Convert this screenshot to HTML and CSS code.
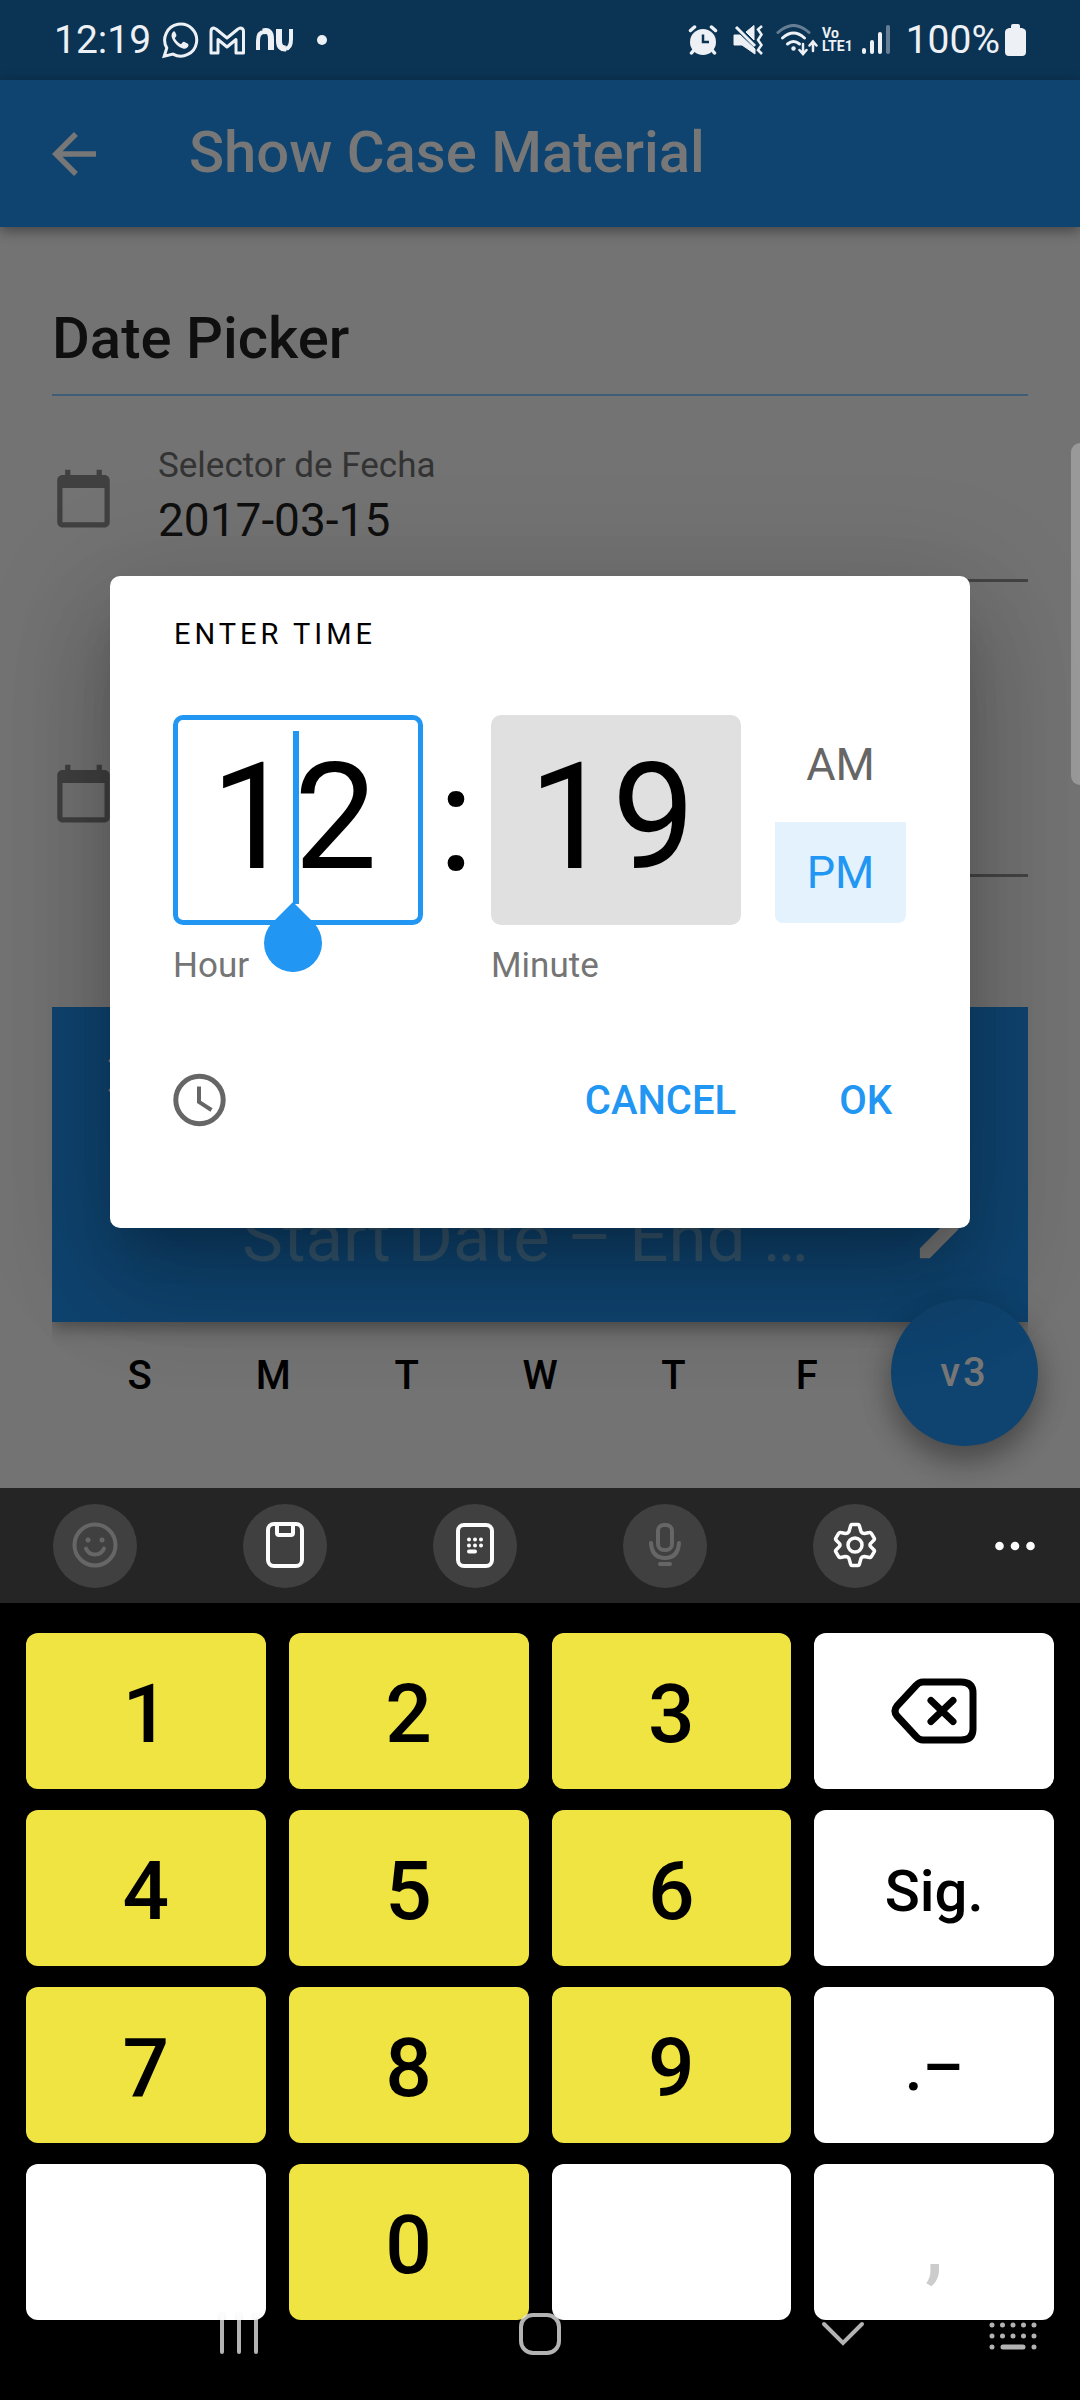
FILE: index.html
```html
<!DOCTYPE html>
<html lang="es">
<head>
<meta charset="utf-8">
<meta name="viewport" content="width=device-width, initial-scale=1">
<title>Show Case Material</title>
<link rel="stylesheet" href="styles.css">
</head>
<body>
<div class="screen">
  <div class="app">
    <div class="status">
      <div class="status-left">
        <span class="status-text">12:19</span>
        <svg width="38" height="38" viewBox="0 0 38 38" fill="none" stroke="currentColor"><path d="M3.200 35.200l2.600-8.200a16 16 0 1 1 6.200 6.100z" stroke-width="3"/><path d="M12.500 10.500c-2 1.500-2.500 4-1.500 6.500 2 5 6 9 11 10.500 2.500.7 5-.5 5.500-3 .1-1-.3-1.500-1-2l-3-1.500c-1-.4-1.500 0-2.200.8l-1.300 1.400c-2.500-1-5-3.500-6.200-6l1.200-1.600c.6-.7.5-1.300.2-2l-1.100-2.600c-.4-.8-1-.9-1.600-.5z" fill="currentColor" stroke="none"/></svg>
        <svg width="36" height="29" viewBox="0 0 36 29" fill="none" stroke="currentColor" stroke-width="3" stroke-linejoin="round"><path d="M2 5.500Q2 2 5 2L7 3l11 9L29 3l2-1q3.500 0 3.500 3.500V27H27V13.500l-9 7.500-9-7.500V27H2z"/></svg>
        <svg width="40" height="24" viewBox="0 0 40 24" fill="none" stroke="currentColor"><path d="M3 22V13Q3 4 9 4" stroke-width="4"/><path d="M8 3.500Q16 1 16 11V22M24 1v12q0 8 7 7.500" stroke-width="6"/><path d="M31 20.500Q36 20 36 11V1" stroke-width="4"/></svg>
        <svg class="status-dot" width="10" height="10" viewBox="0 0 10 10"><circle cx="5" cy="5" r="5" fill="currentColor"/></svg>
      </div>
      <div class="status-right">
        <svg width="30" height="30" viewBox="0 0 30 30" fill="none" stroke="currentColor" stroke-linecap="round"><circle cx="15" cy="17" r="13" fill="currentColor" stroke="none"/><path d="M2.500 5.500l4-3.500M27.500 5.500l-4-3.500M6 25l-2.500 3M24 25l2.500 3" stroke-width="3.500"/><path d="M15 9.500V17h6" class="status-cut" stroke-width="2.500" stroke-linecap="butt"/></svg>
        <svg class="mute" width="30" height="30" viewBox="0 0 30 30" fill="none" stroke="currentColor"><path d="M1 10h6l15 14v5L9 20H1zM13 7l8-6.500V15z" fill="currentColor"/><path d="M3 2l19 19" stroke-width="3"/><path d="M29 1l-4 3.500 3.500 5L25 15l3.500 5L25 25l4 4" stroke-width="2.500"/></svg>
        <svg class="wifi" width="42" height="32" viewBox="0 0 42 32" fill="none" stroke="currentColor" stroke-width="3" stroke-linecap="round"><path d="M2 8.500q15.500-14 31 0" opacity=".4"/><path d="M6.500 14q11-10 22 0M11.500 20q6-5 12 0"/><circle cx="17.500" cy="24.500" r="2.200" fill="currentColor" stroke="none"/><path d="M27 20v9M23.500 26l3.500 4 3.500-4M37 27v-9M33.500 21.500l3.500-4 3.500 4" stroke-width="2.500"/></svg>
        <span class="lte">Vo<br>LTE1</span>
        <svg class="signal" width="28" height="30" viewBox="0 0 28 30" fill="currentColor"><rect y="23" width="4" height="6" rx="2"/><rect x="8" y="15" width="4" height="14" rx="2"/><rect x="16" y="7" width="4" height="22" rx="2"/><rect x="24" width="4" height="29" rx="2" opacity=".4"/></svg>
        <span class="status-text">100%</span>
        <svg class="battery" width="21" height="32" viewBox="0 0 21 32" fill="currentColor"><path d="M6 4V2q0-2 2-2h5q2 0 2 2v2h2q4 1 4 4v20q0 4-4 4H4q-4 0-4-4V8q0-3 4-4z"/></svg>
      </div>
    </div>
    <header class="appbar">
      <button class="icon-button" aria-label="Back"><svg width="66" height="66" viewBox="0 0 24 24" fill="currentColor"><path d="M20 11H7.830l5.590-5.590L12 4l-8 8 8 8 1.410-1.410L7.830 13H20v-2z"/></svg></button>
      <h1 class="title">Show Case Material</h1>
    </header>
    <main class="content">
      <h2 class="section-title">Date Picker</h2>
      <div class="field">
        <svg class="field-icon" width="63" height="63" viewBox="0 0 24 24" fill="currentColor"><path d="M20 3h-1V1h-2v2H7V1H5v2H4c-1.100 0-2 .9-2 2v16c0 1.100.9 2 2 2h16c1.100 0 2-.9 2-2V5c0-1.100-.9-2-2-2zm0 18H4V8h16v13z"/></svg>
        <div class="field-body">
          <label class="field-label" for="date">Selector de Fecha</label>
          <input class="field-input" id="date" type="text" value="2017-03-15">
        </div>
      </div>
      <div class="field">
        <svg class="field-icon" width="63" height="63" viewBox="0 0 24 24" fill="currentColor"><path d="M20 3h-1V1h-2v2H7V1H5v2H4c-1.100 0-2 .9-2 2v16c0 1.100.9 2 2 2h16c1.100 0 2-.9 2-2V5c0-1.100-.9-2-2-2zm0 18H4V8h16v13z"/></svg>
        <div class="field-body field-body-empty">
          <input class="field-input" id="time" type="text" aria-label="Time">
        </div>
      </div>
      <section class="range">
        <button class="icon-button" aria-label="Close"><svg width="63" height="63" viewBox="0 0 24 24" fill="currentColor"><path d="M19 6.410L17.590 5 12 10.590 6.410 5 5 6.410 10.590 12 5 17.590 6.410 19 12 13.410 17.590 19 19 17.590 13.410 12z"/></svg></button>
        <div class="range-row">
          <span class="range-text">Start Date – End …</span>
          <button class="icon-button range-edit" aria-label="Edit"><svg width="63" height="63" viewBox="0 0 24 24" fill="currentColor"><path d="M3 17.250V21h3.750L17.810 9.940l-3.750-3.750L3 17.250zM20.710 7.040a1 1 0 0 0 0-1.410l-2.340-2.340a1 1 0 0 0-1.410 0l-1.830 1.830 3.750 3.750z"/></svg></button>
        </div>
      </section>
      <div class="weekdays"><span>S</span><span>M</span><span>T</span><span>W</span><span>T</span><span>F</span></div>
    </main>
    <button class="fab">v3</button>
    <div class="edge-handle"></div>

    <div class="overlay">
      <form class="dialog" role="dialog" aria-labelledby="dialog-title">
        <h2 class="dialog-title" id="dialog-title">ENTER TIME</h2>
        <div class="time-row">
          <div class="unit">
            <div class="unit-box">
              <input class="unit-input unit-active" id="hour" type="text" value="12">
              <span class="caret"></span>
              <svg class="caret-handle" width="58" height="70" viewBox="0 0 58 70"><path d="M29 0L49.500 20.500A29 29 0 1 1 8.500 20.500z" fill="currentColor"/></svg>
            </div>
            <label class="unit-label" for="hour">Hour</label>
          </div>
          <span class="colon">:</span>
          <div class="unit">
            <div class="unit-box"><input class="unit-input" id="minute" type="text" value="19"></div>
            <label class="unit-label" for="minute">Minute</label>
          </div>
          <div class="period">
            <button type="button" class="period-button period-off" aria-pressed="false">AM</button>
            <button type="button" class="period-button period-on" aria-pressed="true">PM</button>
          </div>
        </div>
        <div class="actions">
          <button type="button" class="icon-button mode" aria-label="Switch to dial"><svg width="53" height="54" viewBox="0 0 53 54" fill="none" stroke="currentColor"><circle cx="26.500" cy="27" r="23.700" stroke-width="5"/><path d="M26 13.500V29l12.500 8" stroke-width="4"/></svg></button>
          <button type="button" class="text-button">CANCEL</button>
          <button type="button" class="text-button">OK</button>
        </div>
      </form>
    </div>
  </div>

  <div class="keyboard">
    <div class="tools">
      <div class="tool-group">
        <button class="tool tool-off" aria-label="Emoji"><svg width="46" height="46" viewBox="0 0 46 46" fill="none" stroke="currentColor" stroke-width="4" stroke-linecap="round"><circle cx="23" cy="23" r="20.500"/><path d="M14 26.500q2.500 6 9 6t9-6"/><circle cx="16" cy="18" r="2.500" fill="currentColor" stroke="none"/><circle cx="30" cy="18" r="2.500" fill="currentColor" stroke="none"/></svg></button>
        <button class="tool" aria-label="Clipboard"><svg width="40" height="46" viewBox="0 0 40 46" fill="none" stroke="currentColor" stroke-width="4"><rect x="3" y="2" width="34" height="42" rx="6"/><path d="M12 2v9q0 2 2 2h12q2 0 2-2V2"/></svg></button>
        <button class="tool" aria-label="Keypad"><svg width="40" height="46" viewBox="0 0 40 46" fill="none" stroke="currentColor" stroke-width="4"><rect x="3" y="3" width="34" height="41" rx="6"/><path d="M14 17.500h0M20 17.500h0M26 17.500h0M14 23.500h0M20 23.500h0M26 23.500h0M14 29.500h6" stroke-linecap="round"/></svg></button>
        <button class="tool tool-off" aria-label="Voice"><svg width="34" height="46" viewBox="0 0 34 46" fill="none" stroke="currentColor" stroke-width="4" stroke-linecap="round"><rect x="10" y="3" width="14" height="25" rx="6"/><path d="M3 21q1 15 14 15t14-15M12 42h10"/></svg></button>
        <button class="tool" aria-label="Settings"><svg width="44" height="46" viewBox="0 0 44 46" fill="none" stroke="currentColor" stroke-width="3.500" stroke-linejoin="round"><path d="M19 2.500h6q1 0 1.300 1L28 9.500q1 2 3.500 2l5-1q1-.3 1.700.7l3 5q.6 1-.2 1.800l-3.500 3.600q-1 1.400 0 2.800l3.500 3.600q.8.800.2 1.800l-3 5q-.7 1-1.700.7l-5-1q-2.500 0-3.500 2l-1.700 6q-.3 1-1.300 1h-6q-1 0-1.300-1L16 36.500q-1-2-3.500-2l-5 1q-1 .3-1.700-.7l-3-5q-.6-1 .2-1.800l3.500-3.600q1-1.400 0-2.800L3 18q-.8-.8-.2-1.800l3-5q.7-1 1.700-.7l5 1q2.500 0 3.500-2l1.700-6q.3-1 1.300-1z"/><circle cx="22" cy="23" r="7"/></svg></button>
      </div>
      <button class="tool-more" aria-label="More"><svg width="40" height="10" viewBox="0 0 40 10" fill="currentColor"><circle cx="4.500" cy="5" r="4.300"/><circle cx="20" cy="5" r="4.300"/><circle cx="35.500" cy="5" r="4.300"/></svg></button>
    </div>
    <div class="keys">
      <button class="key">1</button><button class="key">2</button><button class="key">3</button>
      <button class="key key-alt key-icon" aria-label="Delete"><svg width="86" height="66" viewBox="0 0 86 66" fill="none" stroke="currentColor" stroke-width="7" stroke-linecap="round" stroke-linejoin="round"><path d="M32 4h38q12 0 12 11v36q0 11-12 11H32q-4 0-7-3.500L6 38q-4-5 0-10L25 7.500Q28 4 32 4z"/><path d="M40 22.500l22 21M62 22.500l-22 21"/></svg></button>
      <button class="key">4</button><button class="key">5</button><button class="key">6</button><button class="key key-alt">Sig.</button>
      <button class="key">7</button><button class="key">8</button><button class="key">9</button><button class="key key-alt key-marks">.–</button>
      <button class="key key-alt" aria-label="Blank"></button><button class="key">0</button><button class="key key-alt" aria-label="Blank"></button><button class="key key-alt key-off">,</button>
    </div>
    <nav class="navbar">
      <div class="nav-main">
        <button class="icon-button" aria-label="Recents"><svg width="40" height="42" viewBox="0 0 40 42" stroke="currentColor" stroke-width="4" stroke-linecap="round"><path d="M3 3v36M20 3v36M37 3v36"/></svg></button>
        <button class="icon-button" aria-label="Home"><svg width="42" height="42" viewBox="0 0 42 42" fill="none" stroke="currentColor" stroke-width="4"><rect x="2" y="2" width="38" height="38" rx="12"/></svg></button>
        <button class="icon-button" aria-label="Hide keyboard"><svg width="44" height="42" viewBox="0 0 44 42" fill="none" stroke="currentColor" stroke-width="4" stroke-linecap="round"><path d="M3 11l19 19 19-19"/></svg></button>
      </div>
      <button class="icon-button nav-keyboard" aria-label="Choose keyboard"><svg width="48" height="28" viewBox="0 0 48 28" stroke="currentColor" stroke-width="5" stroke-linecap="round"><path d="M3 3h0M13.500 3h0M24 3h0M34.500 3h0M45 3h0M3 14h0M13.500 14h0M24 14h0M34.500 14h0M45 14h0M3 25h0M14 25h20M45 25h0"/></svg></button>
    </nav>
  </div>
</div>
</body>
</html>
```
FILE: styles.css
```css
* {
  box-sizing: border-box;
}

body {
  margin: 0;
  background: #000;
  font-family: Roboto, "Noto Sans", sans-serif;
}

h1, h2 {
  margin: 0;
  font-weight: 500;
}

button, input {
  margin: 0;
  padding: 0;
  border: 0;
  background: none;
  color: inherit;
  font: inherit;
}

svg {
  display: block;
  flex: none;
}

.screen {
  display: flex;
  flex-direction: column;
  min-height: 100vh;
}

.app {
  position: relative;
  flex: 1;
  overflow: hidden;
  background: #737373;
}

/* Status bar */
.status {
  display: flex;
  justify-content: space-between;
  height: 80px;
  padding: 0 54px;
  background: #0b3353;
  color: #edf1f5;
}

.status-left,
.status-right {
  display: flex;
  align-items: center;
}

.status-left {
  gap: 10px;
}

.status-text {
  font-size: 39px;
  line-height: 48px;
}

.status-dot {
  margin-left: 12px;
}

.status-cut {
  stroke: #0b3353;
}

.mute {
  margin-left: 15px;
}

.wifi {
  margin-left: 13px;
}

.lte {
  margin: 0 9px 0 4px;
  font-size: 14px;
  font-weight: 700;
  line-height: 13px;
}

.signal {
  margin-right: 16px;
}

.battery {
  margin-left: 5px;
}

/* App bar */
.icon-button {
  display: flex;
  align-items: center;
  justify-content: center;
}

.appbar {
  display: flex;
  align-items: center;
  gap: 82px;
  height: 147px;
  padding: 0 41px;
  background: #0f4470;
  color: #777;
  box-shadow: 0 4px 12px rgba(0, 0, 0, .4);
}

.title,
.section-title {
  font-size: 58px;
  line-height: 66px;
}

.title {
  padding-bottom: 4px;
}

/* Page content */
.content {
  padding: 78px 52px 0;
}

.section-title {
  padding-bottom: 23px;
  border-bottom: 2px solid #3f5d77;
  color: #0f0f0f;
}

.field {
  display: flex;
  gap: 43px;
  margin-top: 48px;
}

.field + .field {
  margin-top: 157px;
}

.field-icon {
  margin-top: 23px;
  color: #404040;
}

.field-body {
  display: flex;
  flex: 1;
  flex-direction: column;
  gap: 6px;
  padding-bottom: 31px;
  border-bottom: 3px solid #444;
}

.field-body-empty {
  padding-top: 48px;
}

.field-label {
  padding-top: 2px;
  color: #333;
  font-size: 35px;
  line-height: 40px;
}

.field-input {
  width: 100%;
  height: 56px;
  color: #0f0f0f;
  font-size: 46px;
}

.range {
  display: flex;
  flex-direction: column;
  align-items: flex-start;
  justify-content: space-between;
  height: 315px;
  margin-top: 130px;
  padding: 37px 53px 44px 43px;
  background: #0f4470;
  color: #777;
  box-shadow: 0 6px 16px rgba(0, 0, 0, .35);
  clip-path: inset(0 0 -40px 0);
}

.range-row {
  display: flex;
  align-self: stretch;
  align-items: center;
  justify-content: space-between;
  padding-left: 147px;
}

.range-text {
  color: #35576f;
  font-size: 69px;
  line-height: 80px;
}

.range-edit {
  margin-bottom: 8px;
}

.weekdays {
  display: grid;
  grid-template-columns: repeat(7, 1fr);
  padding: 24px 21px 0;
  color: #000;
  font-size: 40px;
  font-weight: 500;
  line-height: 60px;
  text-align: center;
}

.fab {
  position: absolute;
  right: 42px;
  bottom: 42px;
  width: 147px;
  height: 147px;
  border-radius: 50%;
  background: #0f4470;
  color: #777;
  font-size: 40px;
  font-weight: 500;
  letter-spacing: 3px;
  box-shadow: 0 16px 28px rgba(0, 0, 0, .3), 0 2px 40px rgba(0, 0, 0, .12);
}

.edge-handle {
  position: absolute;
  top: 443px;
  right: 0;
  width: 9px;
  height: 342px;
  border-radius: 9px 0 0 9px;
  background: #999;
}

/* Time dialog */
.overlay {
  position: absolute;
  inset: 0;
  display: flex;
  align-items: flex-start;
  padding: 576px 110px 0;
}

.dialog {
  flex: 1;
  padding: 38px 64px 78px 63px;
  border-radius: 10px;
  background: #fff;
  color: #000;
  box-shadow: 0 30px 42px -18px rgba(0, 0, 0, .2), 0 60px 100px 8px rgba(0, 0, 0, .14), 0 24px 120px 20px rgba(0, 0, 0, .12);
}

.dialog-title {
  padding-left: 1px;
  font-size: 29px;
  font-weight: 400;
  letter-spacing: 4px;
  line-height: 40px;
}

.time-row {
  display: flex;
  margin-top: 61px;
}

.unit {
  flex: 1;
}

.unit-box {
  position: relative;
}

.unit-input {
  display: block;
  width: 100%;
  height: 210px;
  padding: 0 8px 6px 0;
  border: 5px solid transparent;
  border-radius: 10px;
  background: #e0e0e0;
  background-clip: border-box;
  font-size: 148px;
  text-align: center;
}

.unit-active {
  border-color: #2196f3;
  background: #fff;
}

.caret {
  position: absolute;
  top: 16px;
  left: calc(50% - 5px);
  width: 6px;
  height: 173px;
  background: #2196f3;
}

.caret-handle {
  position: absolute;
  top: 187px;
  left: calc(50% - 34px);
  color: #2196f3;
}

.unit-label {
  display: block;
  margin-top: 21px;
  color: #757575;
  font-size: 35px;
  line-height: 40px;
}

.colon {
  width: 68px;
  padding-right: 2px;
  font-size: 148px;
  line-height: 210px;
  text-align: center;
}

.period {
  display: flex;
  flex-direction: column;
  gap: 2px;
  width: 131px;
  height: 210px;
  margin-left: 34px;
  padding: 3px 0 2px;
}

.period-button {
  height: 103px;
  color: #666;
  font-size: 45px;
}

.period-off {
  padding-bottom: 8px;
}

.period-on {
  border-radius: 0 0 8px 8px;
  background: #e3f2fd;
  color: #2196f3;
}

.actions {
  display: flex;
  align-items: center;
  height: 100px;
  margin-top: 64px;
}

.mode {
  margin-right: auto;
  color: #666;
}

.text-button {
  height: 100px;
  padding: 0 14px;
  color: #2196f3;
  font-size: 40px;
  font-weight: 500;
}

.text-button + .text-button {
  margin-left: 75px;
}

/* Keyboard */
.keyboard {
  position: relative;
  padding-bottom: 80px;
  background: #000;
}

.tools {
  display: flex;
  align-items: center;
  justify-content: space-between;
  height: 115px;
  padding: 0 45px 0 53px;
  background: #252525;
  color: #fcfcfc;
}

.tool-group {
  display: flex;
  gap: 106px;
}

.tool {
  display: flex;
  align-items: center;
  justify-content: center;
  width: 84px;
  height: 84px;
  padding-bottom: 2px;
  border-radius: 50%;
  background: #404040;
}

.tool-off {
  color: #666;
}

.keys {
  display: grid;
  grid-template-columns: repeat(4, 1fr);
  grid-auto-rows: 156px;
  gap: 21px 23px;
  padding: 30px 26px 0;
}

.key {
  display: flex;
  align-items: center;
  justify-content: center;
  padding-top: 6px;
  border-radius: 12px;
  background: #f0e442;
  color: #000;
  font-size: 82px;
  font-weight: 500;
}

.key-alt {
  background: #fff;
  font-size: 58px;
}

.key-icon {
  padding-top: 0;
}

.key-marks {
  font-size: 64px;
}

.key-off {
  color: #ccc;
  font-size: 82px;
}

.navbar {
  position: absolute;
  right: 0;
  bottom: 0;
  left: 0;
  display: flex;
  align-items: center;
  justify-content: space-between;
  height: 132px;
  padding: 0 43px 0 219px;
  color: rgba(255, 255, 255, .7);
  filter: drop-shadow(0 0 2px rgba(0, 0, 0, .12));
}

.nav-main {
  display: flex;
  justify-content: space-between;
  width: 79%;
}

.nav-keyboard {
  margin-top: 4px;
}
```
